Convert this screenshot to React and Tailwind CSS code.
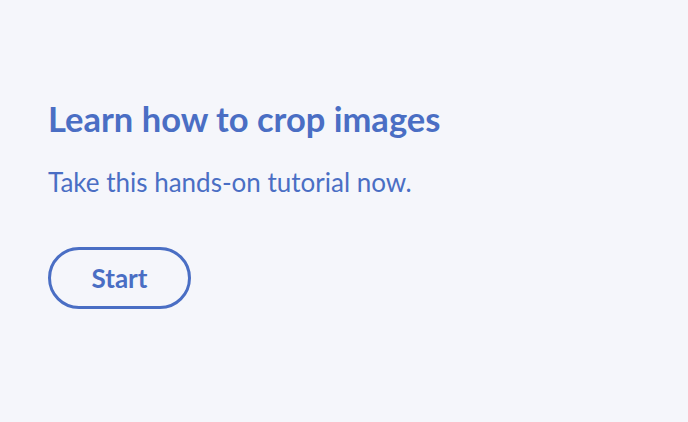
import React from 'react';

export default function App() {
  return (
    <div className="w-[688px] h-[422px] bg-[#f5f6fb] px-12 pt-[98px] text-[#4a6ec4]" style={{ fontFamily: 'Lato, "Open Sans", sans-serif' }}>
      <h1 className="text-[34.5px] font-bold leading-[42px]">Learn how to crop images</h1>
      <p className="mt-[26px] text-[26px] leading-[32px]">Take this hands-on tutorial now.</p>
      <button className="mt-[49px] w-[143px] h-[62px] rounded-full border-[3px] border-[#4a6ec4] text-[26px] font-bold">
        Start
      </button>
    </div>
  );
}
